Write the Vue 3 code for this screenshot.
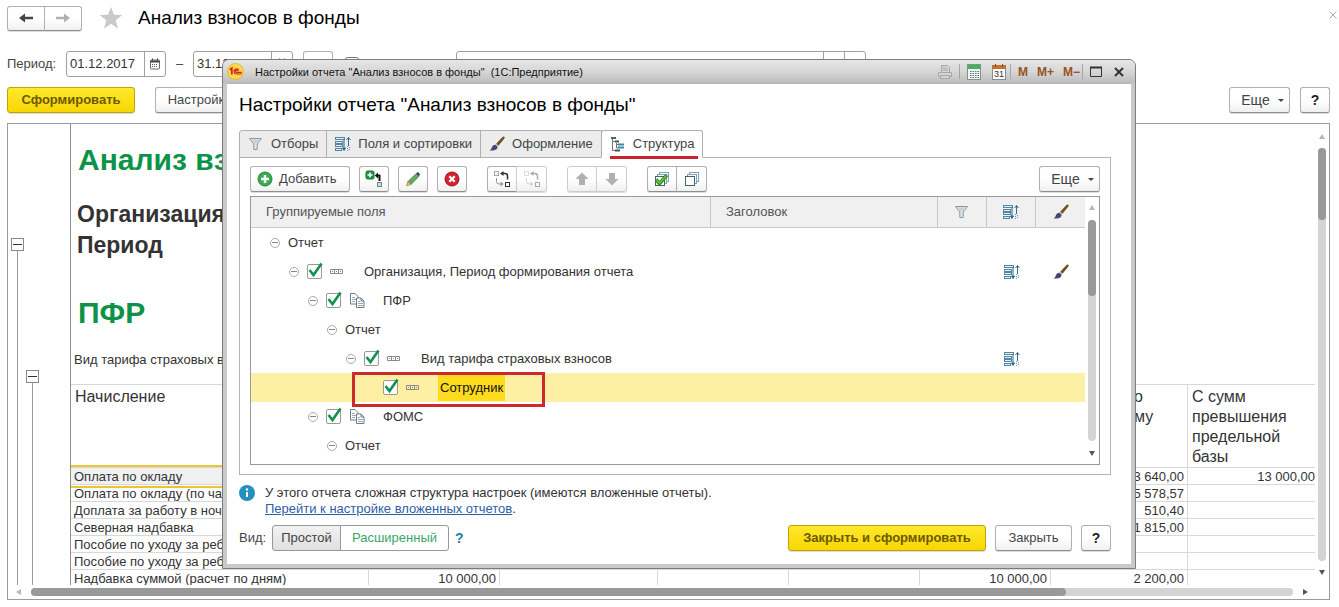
<script setup>
import { ref } from 'vue'

const dateFrom = ref('01.12.2017')
const dateTo = ref('31.12.2017')

const reportRows = [
  { name: 'Оплата по окладу', cells: ['', '', '', '', '', '3 640,00', '13 000,00'] },
  { name: 'Оплата по окладу (по часам)', cells: ['', '', '', '', '', '5 578,57', ''] },
  { name: 'Доплата за работу в ночное время', cells: ['', '', '', '', '', '510,40', ''] },
  { name: 'Северная надбавка', cells: ['', '', '', '', '', '1 815,00', ''] },
  { name: 'Пособие по уходу за ребенком', cells: ['', '', '', '', '', '', ''] },
  { name: 'Пособие по уходу за ребенком', cells: ['', '', '', '', '', '', ''] },
  { name: 'Надбавка суммой (расчет по дням)', cells: ['10 000,00', '', '', '', '10 000,00', '2 200,00', ''] },
]

const tabs = [
  { title: 'Отборы', icon: 'i-funnel' },
  { title: 'Поля и сортировки', icon: 'i-sort' },
  { title: 'Оформление', icon: 'i-brush' },
  { title: 'Структура', icon: 'i-tree' },
]
const activeTab = ref(3)

const tree = ref([
  { level: 0, text: 'Отчет', open: true },
  { level: 1, text: 'Организация, Период формирования отчета', open: true, check: true, icon: 'i-fields', sort: true, brush: true },
  { level: 2, text: 'ПФР', open: true, check: true, icon: 'i-docs' },
  { level: 3, text: 'Отчет', open: true },
  { level: 4, text: 'Вид тарифа страховых взносов', open: true, check: true, icon: 'i-fields', sort: true },
  { level: 5, text: 'Сотрудник', check: true, icon: 'i-fields', selected: true },
  { level: 2, text: 'ФОМС', open: true, check: true, icon: 'i-docs' },
  { level: 3, text: 'Отчет', open: true },
])
</script>

<template>
  <div class="page">
    <svg class="sprite" aria-hidden="true">
      <symbol id="i-funnel" viewBox="0 0 16 16">
        <path d="M1.500 2.500h12L9.200 8v5.500H5.800V8z" fill="#dfe6ea" stroke="#8b979e" />
        <path d="M4 3.500h7L7.500 8z" fill="#c3ced5" />
      </symbol>
      <symbol id="i-sort" viewBox="0 0 16 16">
        <g fill="#e4eef5" stroke="#5585a5">
          <rect x=".5" y="1.500" width="9" height="2" />
          <rect x=".5" y="5.500" width="7" height="2" />
          <rect x=".5" y="8.500" width="7" height="2" />
          <rect x=".5" y="12.500" width="6" height="2" />
        </g>
        <path d="M9 3v11M7.500 12L9 14.500l1.500-2.500z" stroke="#2c6b93" fill="#2c6b93" />
        <path d="M13.500 1.500V10M11.500 4l2-2.500 2 2.500" stroke="#2c6b93" fill="none" />
        <path d="M12.500 10v5M14.500 11v4" stroke="#6d93ad" stroke-dasharray="1 1" />
      </symbol>
      <symbol id="i-brush" viewBox="0 0 16 16">
        <path d="M15.300.7c.8.7.3 1.600-.3 2.300L9.500 9.700 7.200 7.700 13 1.500c.8-.7 1.600-1.300 2.300-.8z" fill="#6d541c" />
        <path d="M7.200 7.700l2.300 2-1 1.100-2.300-2z" fill="#b9b6b0" />
        <path d="M6.200 8.800l2.300 2c.2 2-1.300 3.300-3.200 3.400-1.800.2-3.500.6-5 .3 1.700-.6 2-1.700 2.600-3.200.6-1.400 1.700-2.500 3.300-2.500z" fill="#444478" />
      </symbol>
      <symbol id="i-tree" viewBox="0 0 16 16">
        <path d="M1 2h5" stroke="#5b6266" stroke-width="2" />
        <path d="M2.500 3v11.500H6M2.500 5.500H7M6.500 7v5H8M6.500 8.500H8" stroke="#6d777c" fill="none" />
        <path d="M5 5.500h4M5 14.500h5" stroke="#47545b" stroke-width="2" />
        <path d="M8 8.500h6M8 11.500h6" stroke="#3d85ad" stroke-width="2" />
      </symbol>
      <symbol id="i-fields" viewBox="0 0 16 16">
        <path d="M.5 5.500h12v4H.5zM4.500 5.500v4M8.500 5.500v4M2 7.500h1M6 7.500h1M10 7.500h1" fill="none" stroke="#8a8a8a" />
      </symbol>
      <symbol id="i-docs" viewBox="0 0 16 16">
        <path d="M1.500.5h4.500l3 3v7.500H1.500z" fill="#fff" stroke="#6b7d88" />
        <path d="M3 4.500h3M3 6.500h4M3 8.500h3" stroke="#9aa9b3" />
        <path d="M7.500 5h4.500l3 3v6.500H7.500z" fill="#fff" stroke="#6b7d88" />
        <path d="M12 5v3h3" fill="none" stroke="#6b7d88" />
        <path d="M9 8.500h2M9 10.500h5M9 12.500h5" stroke="#9aa9b3" />
      </symbol>
      <symbol id="i-add" viewBox="0 0 16 16">
        <circle cx="8" cy="8" r="7" fill="#3cab50" stroke="#23863a" />
        <path d="M8 4v8M4 8h8" stroke="#fff" stroke-width="2.500" />
      </symbol>
      <symbol id="i-addgroup" viewBox="0 0 18 18">
        <rect x="1" y="1" width="8" height="8" rx="1.500" fill="#1f9640" stroke="#14702d" />
        <path d="M5 2.500v5M2.500 5h5" stroke="#fff" stroke-width="1.500" />
        <path d="M12 5.500h2.500V11" stroke="#111" stroke-width="2" fill="none" />
        <path d="M13 2.500v6L9.800 5.500z" fill="#111" />
        <rect x="12.500" y="12.500" width="4" height="4" fill="#cfdbe3" stroke="#6e8290" />
      </symbol>
      <symbol id="i-pencil" viewBox="0 0 16 16">
        <path d="M11.300 2.500l2.700 2.700-8 8.300-3-3z" fill="#62ab5f" stroke="#467d48" stroke-width=".8" />
        <path d="M11 2.500l2-1.500 2.200 2.200-1.400 2z" fill="#3c4a75" />
        <path d="M2.800 10.500l3 3-4.300 1.500z" fill="#e2c077" stroke="#a88440" stroke-width=".7" />
      </symbol>
      <symbol id="i-del" viewBox="0 0 16 16">
        <circle cx="8" cy="8" r="7" fill="#d3222d" stroke="#a8131c" />
        <path d="M5.300 5.300l5.400 5.400M10.700 5.300l-5.400 5.400" stroke="#fff" stroke-width="2.200" />
      </symbol>
      <symbol id="i-move" viewBox="0 0 18 18">
        <rect x="1.500" y="1.500" width="4" height="4" fill="#fff" stroke="#a8a8a8" />
        <path d="M14.500 9.500V6q0-2.500-2.500-2.500H9" stroke="#333" stroke-width="1.500" fill="none" />
        <path d="M10.500 1v5L7 3.500z" fill="#333" />
        <path d="M3.500 8v3.500q0 2.500 2.500 2.500h2" stroke="#999" fill="none" />
        <path d="M7.500 11.500l3 2.500-3 2.500z" fill="#999" />
        <rect x="12.500" y="12.500" width="4" height="4" fill="#fff" stroke="#333" />
      </symbol>
      <symbol id="i-up" viewBox="0 0 16 16"><path d="M8 1.500l6.500 6.500H11v6H5V8H1.500z" fill="#adb1b4" /></symbol>
      <symbol id="i-down" viewBox="0 0 16 16"><path d="M8 14.500L1.500 8H5V2h6v6h3.500z" fill="#adb1b4" /></symbol>
      <symbol id="i-sheets" viewBox="0 0 16 16">
        <g fill="#fff" stroke="#7fa3bb">
          <rect x="5.500" y="1.500" width="9" height="9" />
          <rect x="3.500" y="3.500" width="9" height="9" />
          <rect x="1.500" y="5.500" width="9" height="9" stroke="#456073" />
        </g>
      </symbol>
      <symbol id="i-fieldcal" viewBox="0 0 12 12">
        <rect x="1.500" y="2" width="9" height="9" rx="1" fill="#fff" stroke="#666" />
        <path d="M1.500 3.500h9" stroke="#444" stroke-width="2" />
        <path d="M3.500.5v2M8.500.5v2" stroke="#444" />
        <path d="M3 6.500h6M3 8.500h6" stroke="#555" stroke-dasharray="1 1" />
      </symbol>
    </svg>

    <header class="head">
      <div class="group">
        <button class="btn nav" aria-label="Назад">
          <svg width="16" height="12" viewBox="0 0 16 12"><path d="M15 6H5" stroke="#444" stroke-width="2.500" /><path d="M1 6l6-4.500v9z" fill="#444" /></svg>
        </button>
        <button class="btn nav" aria-label="Вперед">
          <svg width="16" height="12" viewBox="0 0 16 12"><path d="M1 6h10" stroke="#b0b0b0" stroke-width="2.500" /><path d="M15 6L9 1.500v9z" fill="#b0b0b0" /></svg>
        </button>
      </div>
      <svg class="star" width="24" height="22" viewBox="0 0 24 22"><path d="M12 0l2.900 7.800 8.500.2-6.700 5.200L19 21.500l-7-4.700-7 4.700 2.300-8.300L.6 8l8.500-.2z" fill="#cacaca" /></svg>
      <h1>Анализ взносов в фонды</h1>
      <button class="close" aria-label="Закрыть вкладку">
        <svg width="8" height="8" viewBox="0 0 8 8"><path d="M.5.5l7 7M7.500.5l-7 7" stroke="#aaa" /></svg>
      </button>
    </header>

    <div class="period">
      <label for="from">Период:</label>
      <div class="date">
        <input id="from" v-model="dateFrom" type="text" />
        <button aria-label="Выбрать дату начала"><svg width="12" height="12"><use href="#i-fieldcal" /></svg></button>
      </div>
      <span class="dash">–</span>
      <div class="date">
        <input v-model="dateTo" type="text" aria-label="Конец периода" />
        <button aria-label="Выбрать дату конца"><svg width="12" height="12"><use href="#i-fieldcal" /></svg></button>
      </div>
      <button class="btn sq" aria-label="Выбрать период"></button>
      <input class="tick" type="checkbox" aria-label="Отбор по организации" />
      <div class="date combo">
        <input type="text" aria-label="Организация" />
        <button aria-label="Выбрать из списка"></button>
        <button aria-label="Открыть"></button>
      </div>
    </div>

    <div class="commands">
      <button class="btn primary run">Сформировать</button>
      <button class="btn settings">Настройки...</button>
      <span class="spacer"></span>
      <button class="btn more">Еще <i class="caret"></i></button>
      <button class="btn sq help">?</button>
    </div>

    <main class="report">
      <div class="sheet">
        <div class="gutter">
          <div class="fold outer"><button aria-label="Свернуть группу"></button></div>
          <div class="fold inner"><button aria-label="Свернуть группу"></button></div>
        </div>
        <div class="content">
          <h2 class="big">Анализ взносов в фонды</h2>
          <p class="sub">Организация</p>
          <p class="sub">Период</p>
          <h2 class="big fund">ПФР</h2>
          <p class="tariff">Вид тарифа страховых взносов</p>
          <table class="data">
            <colgroup>
              <col class="c0" /><col class="c1" /><col class="c2" /><col class="c1" /><col class="c1" /><col class="c1" /><col class="c3" /><col />
            </colgroup>
            <thead>
              <tr>
                <th>Начисление</th>
                <th></th><th></th><th></th><th></th><th></th>
                <th class="cut">о<br />му</th>
                <th>С сумм превышения предельной базы</th>
              </tr>
            </thead>
            <tbody>
              <tr v-for="(row, r) in reportRows" :key="r">
                <td :class="{ current: r === 0 }">{{ row.name }}</td>
                <td v-for="(c, i) in row.cells" :key="i" class="num">{{ c }}</td>
              </tr>
            </tbody>
          </table>
        </div>
        <div class="vbar">
          <i class="arr up"></i>
          <div class="track"><div class="thumb"></div></div>
          <i class="arr down"></i>
        </div>
      </div>
      <div class="hbar">
        <i class="arr left"></i>
        <div class="track"><div class="thumb"></div></div>
        <i class="arr right"></i>
      </div>
    </main>

    <section class="dialog" role="dialog" aria-labelledby="dlg-title">
      <div class="titlebar">
        <svg class="logo" width="17" height="17" viewBox="0 0 17 17">
          <circle cx="8.500" cy="8.500" r="8" fill="#fbd94b" stroke="#e5b93a" />
          <path d="M2.800 6.800l2-1.500v6.200" fill="none" stroke="#d2201f" stroke-width="1.700" />
          <path d="M11.800 7a2.600 2.600 0 1 0-2 4h5M11 8.200a1.200 1.200 0 1 0-.8 1.200h4.600" fill="none" stroke="#d2201f" stroke-width="1.200" />
        </svg>
        <span class="caption">Настройки отчета "Анализ взносов в фонды"&nbsp; (1С:Предприятие)</span>
        <span class="spacer"></span>
        <button class="print" aria-label="Печать">
          <svg width="16" height="16" viewBox="0 0 16 16" fill="#d3d5d7" stroke="#a3a8ac"><path d="M4.500 8V1.500h6l2 2V8" /><path d="M1.500 8.500h13v4h-13z" /><path d="M3.500 11.500h9v3h-9z" /><path d="M6 4h4M6 6h5" /></svg>
        </button>
        <i class="sep"></i>
        <button aria-label="Калькулятор">
          <svg width="14" height="16" viewBox="0 0 14 16"><rect x=".5" y=".5" width="13" height="15" fill="#f3f6f3" stroke="#83938a" /><rect x="1" y="1" width="12" height="4" fill="#42b35a" /><path d="M3 7.500h9M3 9.500h9M3 11.500h9M3 13.500h9" stroke="#5b7181" stroke-dasharray="1.500 1" /></svg>
        </button>
        <button aria-label="Календарь">
          <svg width="14" height="16" viewBox="0 0 14 16"><rect x=".5" y="1.500" width="13" height="14" fill="#fff" stroke="#8c8c8c" /><rect x="0" y="1" width="14" height="4" fill="#c07333" /><path d="M3.500 0v3M10.500 0v3" stroke="#8a4b18" /><text x="7" y="13" text-anchor="middle" font-size="9" font-family="Liberation Sans, sans-serif" fill="#333">31</text></svg>
        </button>
        <i class="sep"></i>
        <button class="mem">M</button>
        <button class="mem">M+</button>
        <button class="mem">M−</button>
        <i class="sep"></i>
        <button class="max" aria-label="Развернуть"><svg width="12" height="12" viewBox="0 0 12 12"><path d="M.5 1.500h11v9H.5z" fill="none" stroke="#333" /><path d="M0 1.500h12" stroke="#333" stroke-width="2" /></svg></button>
        <button aria-label="Закрыть окно"><svg width="10" height="10" viewBox="0 0 10 10"><path d="M1 1l8 8M9 1L1 9" stroke="#333" stroke-width="2" /></svg></button>
      </div>

      <div class="body">
        <h2 id="dlg-title">Настройки отчета "Анализ взносов в фонды"</h2>

        <div class="tabs" role="tablist">
          <button v-for="(t, i) in tabs" :key="t.title" role="tab" :aria-selected="i === activeTab" :class="{ active: i === activeTab }" @click="activeTab = i">
            <svg width="16" height="16"><use :href="'#' + t.icon" /></svg>{{ t.title }}
          </button>
        </div>

        <div class="panel">
          <div class="tools">
            <button class="btn add"><svg width="16" height="16"><use href="#i-add" /></svg>Добавить</button>
            <button class="btn sq" aria-label="Добавить группировку"><svg width="18" height="18"><use href="#i-addgroup" /></svg></button>
            <button class="btn sq" aria-label="Изменить"><svg width="16" height="16"><use href="#i-pencil" /></svg></button>
            <button class="btn sq" aria-label="Удалить"><svg width="16" height="16"><use href="#i-del" /></svg></button>
            <div class="group gap">
              <button class="btn sq" aria-label="Сгруппировать"><svg width="18" height="18"><use href="#i-move" /></svg></button>
              <button class="btn sq dim" aria-label="Разгруппировать"><svg width="18" height="18"><use href="#i-move" /></svg></button>
            </div>
            <div class="group gap pale">
              <button class="btn sq" aria-label="Переместить вверх"><svg width="16" height="16"><use href="#i-up" /></svg></button>
              <button class="btn sq" aria-label="Переместить вниз"><svg width="16" height="16"><use href="#i-down" /></svg></button>
            </div>
            <div class="group gap">
              <button class="btn sq" aria-label="Установить флажки">
                <svg width="16" height="16" viewBox="0 0 16 16"><use href="#i-sheets" /><path d="M2 8.500l3.500 4L13 4" fill="none" stroke="#2b8c1f" stroke-width="3.500" /><path d="M2.500 9l3 3L12.500 4.500" fill="none" stroke="#6fcb3e" stroke-width="1.500" /></svg>
              </button>
              <button class="btn sq" aria-label="Снять флажки"><svg width="16" height="16"><use href="#i-sheets" /></svg></button>
            </div>
            <span class="spacer"></span>
            <button class="btn more">Еще <i class="caret"></i></button>
          </div>

          <div class="grid">
            <table class="tree">
              <colgroup><col class="g0" /><col class="g1" /><col class="g2" /><col class="g2" /><col class="g2" /></colgroup>
              <thead>
                <tr>
                  <th>Группируемые поля</th>
                  <th>Заголовок</th>
                  <th class="ic"><svg width="16" height="16"><use href="#i-funnel" /></svg></th>
                  <th class="ic"><svg width="16" height="16"><use href="#i-sort" /></svg></th>
                  <th class="ic"><svg width="16" height="16"><use href="#i-brush" /></svg></th>
                </tr>
              </thead>
              <tbody>
                <tr v-for="(n, i) in tree" :key="i" :class="{ selected: n.selected }">
                  <td>
                    <div class="node" :style="{ paddingLeft: 19 + n.level * 19 + 'px' }">
                      <button v-if="n.open" class="toggle" aria-label="Свернуть"></button>
                      <span v-else class="notoggle"></span>
                      <template v-if="n.icon">
                        <label class="check">
                          <input v-model="n.check" type="checkbox" :aria-label="n.text" />
                          <svg v-if="n.check" width="18" height="18" viewBox="0 0 18 18"><path d="M3.500 9l4 5L15.500 2.500" fill="none" stroke="#129150" stroke-width="2.600" /></svg>
                        </label>
                        <svg class="kind" width="16" height="16"><use :href="'#' + n.icon" /></svg>
                      </template>
                      <span class="text">{{ n.text }}</span>
                      <span v-if="n.selected" class="mark"></span>
                    </div>
                  </td>
                  <td></td>
                  <td></td>
                  <td class="ic"><svg v-if="n.sort" width="16" height="16"><use href="#i-sort" /></svg></td>
                  <td class="ic"><svg v-if="n.brush" width="16" height="16"><use href="#i-brush" /></svg></td>
                </tr>
              </tbody>
            </table>
            <div class="vbar">
              <i class="arr up"></i>
              <div class="track"><div class="thumb"></div></div>
              <i class="arr down"></i>
            </div>
          </div>
        </div>

        <div class="info">
          <svg width="16" height="16" viewBox="0 0 16 16"><circle cx="8" cy="8" r="8" fill="#2590be" /><path d="M8 7v5" stroke="#fff" stroke-width="2" /><circle cx="8" cy="4.500" r="1.200" fill="#fff" /></svg>
          <p>У этого отчета сложная структура настроек (имеются вложенные отчеты).<br /><a href="#">Перейти к настройке вложенных отчетов</a>.</p>
        </div>

        <div class="footer">
          <span class="view">Вид:</span>
          <div class="group modes">
            <button class="simple">Простой</button>
            <button class="advanced">Расширенный</button>
          </div>
          <a class="hint" href="#">?</a>
          <span class="spacer"></span>
          <button class="btn primary ok">Закрыть и сформировать</button>
          <button class="btn cancel">Закрыть</button>
          <button class="btn sq help">?</button>
        </div>
      </div>
    </section>
  </div>
</template>

<style>
body {
  margin: 0;
  background: #fff;
}
</style>

<style scoped>
* {
  box-sizing: border-box;
}
.page {
  position: relative;
  display: flex;
  flex-direction: column;
  height: 100vh;
  padding: 5px 9px 7px 7px;
  overflow: hidden;
  font: 13px/16px "Liberation Sans", Arial, sans-serif;
  color: #444;
}
.sprite {
  position: absolute;
  width: 0;
  height: 0;
}
h1, h2, p {
  margin: 0;
  font-weight: normal;
}
button, input {
  margin: 0;
  padding: 0;
  font: inherit;
  color: inherit;
}
button {
  display: flex;
  align-items: center;
  justify-content: center;
  flex: none;
  border: 0;
  background: none;
  white-space: nowrap;
}
svg {
  display: block;
  flex: none;
}
.spacer {
  flex: 1;
}
.btn {
  height: 26px;
  border: 1px solid #b0b0b0;
  border-bottom-color: #8e8e8e;
  border-radius: 3px;
  background: linear-gradient(#fff 50%, #f0f0f0);
  box-shadow: 0 1px 0 #ddd;
  color: #444;
}
.sq {
  width: 30px;
}
.help {
  font-weight: bold;
  font-size: 14px;
  color: #222;
}
.primary {
  border-color: #c2a200;
  background: linear-gradient(#ffe92e, #f8d600);
  font-weight: bold;
  color: #6b5900;
}
.group {
  display: flex;
}
.group .btn + .btn {
  margin-left: -1px;
  width: 31px;
  border-radius: 0 3px 3px 0;
}
.group .btn:first-child {
  border-radius: 3px 0 0 3px;
}
.more {
  width: 61px;
  gap: 8px;
  padding-left: 6px;
  font-size: 14px;
}
.caret {
  border: 3px solid transparent;
  border-top-color: #444;
  border-bottom: 0;
}

.head {
  display: flex;
  align-items: center;
  height: 26px;
}
.head .group .nav {
  width: 38px;
  height: 25px;
}
.star {
  margin: 0 15px 0 17px;
}
h1 {
  flex: 1;
  font-size: 19px;
  line-height: 26px;
  color: #000;
}
.close {
  margin-right: -7px;
  margin-bottom: 6px;
}

.period {
  display: flex;
  align-items: center;
  margin-top: 20px;
}
.period label {
  width: 59px;
}
.date {
  display: flex;
  width: 100px;
  height: 26px;
  border: 1px solid #a0a0a0;
  border-radius: 3px;
  background: #fff;
}
.date input {
  flex: 1;
  min-width: 0;
  padding-left: 3px;
  border: 0;
  background: none;
  outline: 0;
  color: #333;
}
.date button {
  width: 21px;
  border-left: 1px solid #a0a0a0;
}
.dash {
  width: 27px;
  text-align: center;
}
.period .sq {
  margin: 0 12px 0 10px;
}
.tick {
  width: 14px;
  height: 14px;
}
.combo {
  width: 410px;
  margin-left: 97px;
}
.commands {
  display: flex;
  gap: 10px;
  margin-top: 10px;
}
.run {
  width: 128px;
  margin-right: 10px;
}
.settings {
  width: 100px;
}

.report {
  display: flex;
  flex: 1;
  flex-direction: column;
  min-height: 0;
  margin-top: 10px;
  border: 1px solid #9c9c9c;
}
.sheet {
  display: flex;
  flex: 1;
  min-height: 0;
}
.gutter {
  display: flex;
  width: 63px;
  padding-left: 2px;
  border-right: 1px solid #8c8c8c;
}
.fold {
  display: flex;
  flex-direction: column;
  align-items: center;
  width: 15px;
}
.fold button {
  width: 13px;
  height: 13px;
  border: 1px solid #888;
}
.fold button::before {
  content: "";
  width: 9px;
  height: 1px;
  background: #333;
}
.fold::after {
  content: "";
  flex: 1;
  width: 1px;
  background: #9c9c9c;
}
.outer {
  padding-top: 114px;
}
.inner {
  padding-top: 246px;
}
.content {
  flex: 1;
  min-width: 0;
  overflow: hidden;
  color: #333;
}
.big {
  padding: 15px 0 0 7px;
  font-size: 30px;
  line-height: 42px;
  font-weight: bold;
  color: #0d9249;
}
.sub {
  padding-left: 6px;
  font-size: 23px;
  line-height: 31px;
  font-weight: bold;
}
.big + .sub {
  padding-top: 18px;
}
.fund {
  padding-top: 31px;
}
.tariff {
  padding: 17px 0 15px 3px;
  line-height: 18px;
}
.data {
  width: 100%;
  table-layout: fixed;
  border-collapse: separate;
  border-spacing: 0;
}
.c0 { width: 298px; }
.c1 { width: 131px; }
.c2 { width: 158px; }
.c3 { width: 137px; }
.data th, .data td {
  border: 0 solid #d8d8d8;
  border-width: 0 1px 1px 0;
  text-align: left;
}
.data th {
  height: 84px;
  padding: 2px 4px 0;
  border-top-width: 1px;
  font-size: 16px;
  line-height: 20px;
  font-weight: normal;
  vertical-align: top;
}
.data th:last-child, .data td:last-child {
  border-right: 0;
}
.data .cut {
  padding-left: 83px;
}
.data td {
  height: 17px;
  padding: 2px 3px 0;
  line-height: 14px;
  white-space: nowrap;
  overflow: hidden;
}
.data .num {
  text-align: right;
}
.data td:last-child {
  padding-right: 0;
}
.data .current {
  background: #f0f0f0;
  outline: 2px solid #ecc632;
  outline-offset: 1px;
}

.vbar {
  display: flex;
  flex-direction: column;
  align-items: center;
  width: 14px;
  padding: 10px 0;
}
.track {
  flex: 1;
  border-radius: 4px;
  background: #d4d4d4;
}
.thumb {
  border-radius: 4px;
  background: #999;
}
.vbar .track, .vbar .thumb {
  width: 8px;
}
.vbar .track {
  margin: 9px 0;
}
.report .thumb {
  height: 72px;
}
.hbar {
  display: flex;
  align-items: center;
  height: 14px;
  padding: 0 21px 0 8px;
}
.hbar .track {
  margin: 0 10px;
}
.report .hbar .track, .report .hbar .thumb {
  height: 8px;
}
.hbar .thumb {
  width: 82%;
}
.arr {
  border: 3px solid transparent;
}
.up {
  border-bottom: 5px solid #b5b5b5;
  border-top: 0;
}
.down {
  border-top: 5px solid #555;
  border-bottom: 0;
}
.left {
  border-right: 5px solid #b5b5b5;
  border-left: 0;
}
.right {
  border-left: 5px solid #555;
  border-right: 0;
}

.dialog {
  position: absolute;
  top: 59px;
  left: 222px;
  right: 203px;
  padding: 0 4px 4px;
  border: 1px solid #7c7c7c;
  border-radius: 7px 7px 0 0;
  background: #c9c9c9;
}
.titlebar {
  display: flex;
  align-items: center;
  height: 23px;
  margin: 0 -4px;
  padding: 0 7px 0 4px;
  border-radius: 6px 6px 0 0;
  background: linear-gradient(#e6e6e6, #d6d6d6 50%, #bcbcbc);
}
.caption {
  margin-left: 11px;
  font-size: 11px;
  color: #111;
}
.titlebar button {
  margin: 0 4px 0 7px;
}
.titlebar .print {
  margin-right: 6px;
}
.sep {
  width: 1px;
  height: 15px;
  background: #a4a4a4;
}
.titlebar .mem {
  margin: 0 2px 0 7px;
  font-size: 12px;
  font-weight: bold;
  color: #96531e;
}
.titlebar .max {
  margin-right: 5px;
}
.body {
  display: flex;
  flex-direction: column;
  padding: 9px 20px 13px 12px;
  border-top: 1px solid #b4b4b4;
  background: #fff;
}
.body h2 {
  font-size: 19px;
  line-height: 24px;
  color: #000;
}
.tabs {
  display: flex;
  margin-top: 13px;
}
.tabs button {
  position: relative;
  height: 28px;
  gap: 7px;
  margin-right: -1px;
  padding: 0 8px;
  border: 1px solid #b0b0b0;
  background: #ececec;
}
.tabs button:first-child {
  border-radius: 3px 0 0 0;
}
.tabs .active {
  border-bottom-color: #fff;
  border-radius: 3px 3px 0 0;
  background: #fff;
}
.tabs .active::after {
  content: "";
  position: absolute;
  right: 4px;
  bottom: -2px;
  left: 8px;
  height: 3px;
  background: #c9222d;
}
.panel {
  margin-top: -1px;
  padding: 8px 10px 9px;
  border: 1px solid #b4b4b4;
}
.tools {
  display: flex;
  gap: 9px;
}
.add {
  justify-content: flex-start;
  width: 100px;
  padding-left: 6px;
  gap: 6px;
}
.gap {
  margin-left: 11px;
}
.pale .btn {
  border-color: #ccc;
}
.dim svg {
  opacity: 0.4;
}
.group .dim {
  border-color: #ccc;
}
.grid {
  display: flex;
  align-items: stretch;
  height: 269px;
  margin-top: 4px;
  border: 1px solid #999;
}
.tree {
  flex: 1;
  min-width: 0;
  align-self: flex-start;
  table-layout: fixed;
  border-spacing: 0;
}
.g1 { width: 227px; }
.g2 { width: 49px; }
.tree th {
  height: 31px;
  padding: 0 15px;
  border-right: 1px solid #c8c8c8;
  border-bottom: 1px solid #c8c8c8;
  background: #f0f0f0;
  font-weight: normal;
  text-align: left;
  color: #555;
}
.tree th:last-child {
  border-right: 0;
}
.tree td {
  height: 29px;
  padding: 0;
  color: #333;
}
.tree .ic {
  padding: 0;
}
.ic svg {
  margin: 0 auto;
}
.selected td {
  background: #fdefa3;
}
.node {
  position: relative;
  display: flex;
  align-items: center;
  height: 29px;
}
.toggle, .notoggle {
  width: 10px;
  height: 10px;
  margin-right: 8px;
}
.toggle {
  border: 1px solid #aaa;
  border-radius: 50%;
}
.toggle::before {
  content: "";
  width: 6px;
  height: 1px;
  background: #888;
}
.check {
  position: relative;
  width: 15px;
  height: 15px;
}
.check input {
  display: block;
  appearance: none;
  width: 15px;
  height: 15px;
  border: 1px solid #999;
  border-radius: 2px;
  background: #fff;
}
.check svg {
  position: absolute;
  top: -3px;
  left: -1px;
}
.kind {
  margin: 0 16px 0 8px;
}
.text {
  white-space: nowrap;
}
.kind + .text {
  padding: 5px 2px;
}
.selected .text {
  background: #ffdb1f;
  color: #111;
}
.mark {
  position: absolute;
  top: -1px;
  left: 101px;
  width: 193px;
  height: 35px;
  border: 3px solid #ce2a2e;
}
.grid .vbar {
  padding: 8px 0;
}
.grid .track {
  margin: 10px 0;
}
.grid .thumb {
  height: 76px;
}

.info {
  display: flex;
  gap: 10px;
  margin-top: 10px;
}
.info p {
  color: #333;
}
.info a {
  color: #2f5da8;
}
.footer {
  display: flex;
  align-items: center;
  margin-top: 8px;
}
.view {
  width: 33px;
}
.modes button {
  height: 26px;
  border: 1px solid #999;
}
.modes .simple {
  width: 69px;
  border-radius: 3px 0 0 3px;
  background: linear-gradient(#f2f2f2, #e0e0e0);
}
.modes .advanced {
  width: 109px;
  margin-left: -1px;
  border-radius: 0 3px 3px 0;
  background: #fff;
  color: #3aa76a;
}
.hint {
  margin-left: 6px;
  font-size: 14px;
  font-weight: bold;
  color: #1d7fae;
  text-decoration: none;
}
.ok {
  width: 198px;
}
.cancel {
  width: 77px;
  margin: 0 9px;
}
</style>
